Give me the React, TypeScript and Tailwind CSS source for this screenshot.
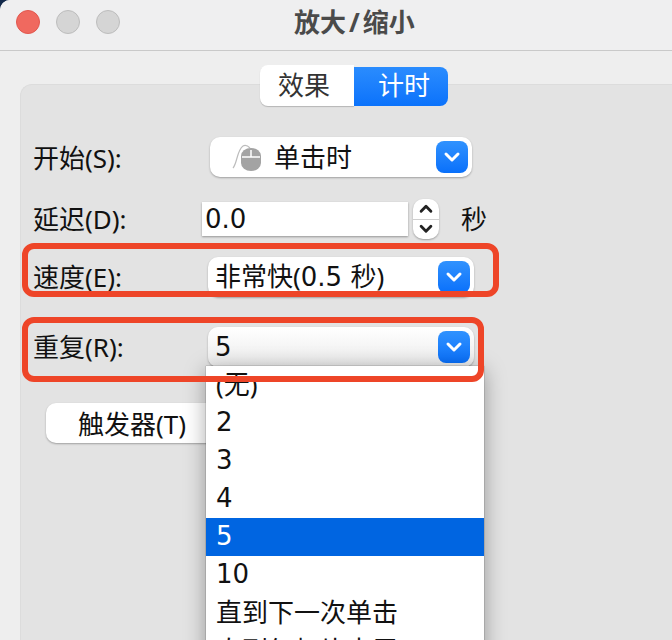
import { ChevronDown, ChevronUp } from "lucide-react";

const options = ["(无)", "2", "3", "4", "5", "10", "直到下一次单击", "直到幻灯片末尾"];
const digits = "[font-family:'DejaVu_Sans','Noto_Sans_CJK_SC',sans-serif]";

function BlueChevron() {
  return (
    <span className="flex h-8 w-8 items-center justify-center rounded-lg bg-gradient-to-b from-[#3092fe] to-[#0870fb]">
      <ChevronDown className="h-6 w-6 text-white" strokeWidth={3} />
    </span>
  );
}

function MouseIcon() {
  return (
    <svg width="30" height="30" viewBox="0 0 30 30" className="shrink-0">
      <path d="M1 26 C5 22 5 8 11 4 C13 3 15 3 18 6" fill="none" stroke="#bcbcbc" strokeWidth="1.2" />
      <path d="M9 14 a10 8 0 0 1 20 0 V21 a10 8 0 0 1 -20 0 Z" fill="#a3a3a3" />
      <path d="M10 15 h18 M19 8 v7" stroke="#ffffff" strokeWidth="1.5" />
    </svg>
  );
}

export default function App() {
  return (
    <div className="relative h-[640px] w-[672px] overflow-hidden bg-[#12294a] text-[26px] leading-none text-[#111] [font-family:'Noto_Sans','Noto_Sans_CJK_SC',sans-serif]">
      <div className="h-full rounded-tl-[10px] bg-[#eeeeee]">
        <header className="flex h-[51px] items-center gap-4 rounded-tl-[10px] border-b border-[#c9c9c9] bg-[#efeff0] pb-[6px] pl-4">
          <span className="h-6 w-6 rounded-full border border-[#e2574e] bg-[#f0695f]" />
          <span className="h-6 w-6 rounded-full border border-[#bdbdbd] bg-[#d5d5d5]" />
          <span className="h-6 w-6 rounded-full border border-[#bdbdbd] bg-[#d5d5d5]" />
          <h1 className="ml-[158px] flex font-bold text-[#4a4a4a]">
            放大<span className="mx-[3px]">/</span>缩小
          </h1>
        </header>

        <main className="ml-5 mt-[33px] h-[600px] rounded-tl-xl border-l border-t border-[#dcdcdc] bg-[#e3e3e3]">
          <div className="-mt-[20px] ml-[239px] flex h-[41px] w-[188px] items-start">
            <button className="flex h-[41px] w-[94px] items-center justify-center rounded-l-lg bg-white pb-[2px] pr-[6px] text-[#333] shadow-[0_1px_1px_rgba(0,0,0,0.2)]">
              效果
            </button>
            <button className="mt-[2px] flex h-[39px] w-[94px] items-center justify-center rounded-r-lg bg-gradient-to-b from-[#2a8cfe] to-[#0a72fb] pb-[4px] pl-[6px] text-white">
              计时
            </button>
          </div>

          <div className="mt-[31px] flex h-10 items-center pl-3">
            <span className="w-[177px] pt-[2px]">开始(S):</span>
            <div className="flex h-10 w-[262px] items-center rounded-[10px] bg-white pl-[22px] pr-1 shadow-[0_1px_2px_rgba(0,0,0,0.3)]">
              <MouseIcon />
              <span className="ml-3 pb-[1px]">单击时</span>
              <span className="ml-auto"><BlueChevron /></span>
            </div>
          </div>

          <div className="mt-[22px] flex h-10 items-center pl-3">
            <span className="w-[169px]">延迟(D):</span>
            <div className={`flex h-[34px] w-[206px] items-center bg-white pl-[3px] shadow-[0_1px_2px_rgba(0,0,0,0.35)] ${digits}`}>0.0</div>
            <div className="ml-[5px] flex h-10 w-[26px] flex-col items-center justify-center rounded-[10px] bg-white shadow-[0_1px_2px_rgba(0,0,0,0.3)]">
              <ChevronUp className="h-5 w-5 text-[#222]" strokeWidth={3.5} />
              <span className="h-px w-full bg-[#cfcfcf]" />
              <ChevronDown className="h-5 w-5 text-[#222]" strokeWidth={3.5} />
            </div>
            <span className="ml-[22px]">秒</span>
          </div>

          <div className="mt-[18px] flex h-10 items-center pl-3">
            <span className="w-[175px]">速度(E):</span>
            <div className="flex h-10 w-[266px] items-center rounded-[10px] bg-white pl-[7px] pr-1 shadow-[0_1px_2px_rgba(0,0,0,0.3)]">
              <span className="whitespace-pre pb-[1px]">非常快(<span className={digits}>0.5 </span>秒)</span>
              <span className="ml-auto"><BlueChevron /></span>
            </div>
          </div>

          <div className="mt-[30px] flex h-10 items-center pl-3">
            <span className="w-[175px]">重复(R):</span>
            <div className="flex h-10 w-[266px] items-center rounded-[10px] bg-gradient-to-b from-white to-[#ebebeb] pl-[7px] pr-1 shadow-[0_1px_2px_rgba(0,0,0,0.3)]">
              <span className={`pb-[1px] ${digits}`}>5</span>
              <span className="ml-auto"><BlueChevron /></span>
            </div>
          </div>

          <button className="ml-[25px] mt-9 flex h-10 w-[174px] items-center justify-center rounded-[10px] bg-white pr-[2px] pt-[2px] shadow-[0_1px_2px_rgba(0,0,0,0.3)]">
            触发器(T)
          </button>
        </main>
      </div>

      {/* open popup of the repeat select */}
      <ul className="absolute left-[206px] top-[366px] w-[278px] bg-white shadow-[0_0_1px_rgba(0,0,0,0.6),0_4px_20px_rgba(0,0,0,0.35)]">
        {options.map((o) => (
          <li
            key={o}
            className={`flex h-[38px] items-center pb-[3px] pl-[10px] ${/^\d+$/.test(o) ? digits : ""} ${o === "5" ? "bg-[#0065e1] text-white" : ""}`}
          >
            {o}
          </li>
        ))}
      </ul>

      {/* red annotation frames */}
      <div className="absolute left-[22px] top-[243px] h-[54px] w-[477px] rounded-xl border-[6px] border-[#ee4528]" />
      <div className="absolute left-[22px] top-[317px] h-[65px] w-[462px] rounded-xl border-[6px] border-[#ee4528]" />
    </div>
  );
}
